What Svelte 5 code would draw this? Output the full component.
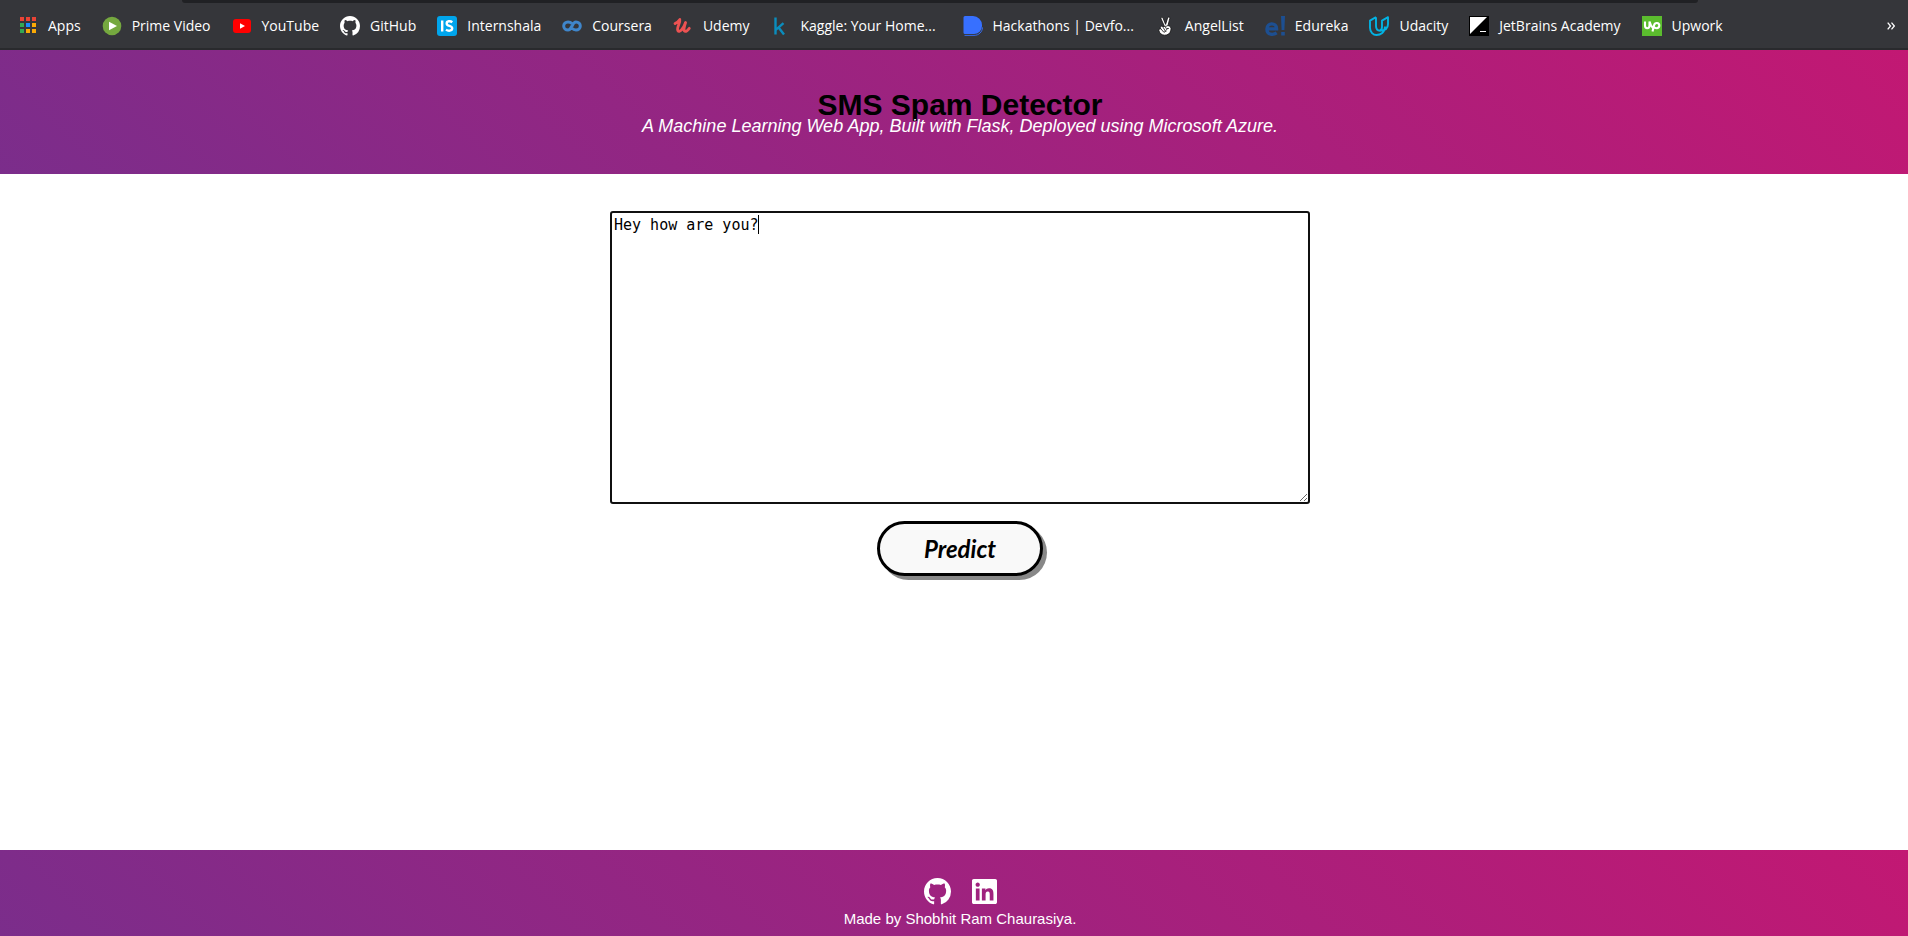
<script>
  const bookmarks = [
    { id: 'apps', label: 'Apps' },
    { id: 'prime', label: 'Prime Video' },
    { id: 'youtube', label: 'YouTube' },
    { id: 'github', label: 'GitHub' },
    { id: 'internshala', label: 'Internshala' },
    { id: 'coursera', label: 'Coursera' },
    { id: 'udemy', label: 'Udemy' },
    { id: 'kaggle', label: 'Kaggle: Your Home...', long: true },
    { id: 'devfolio', label: 'Hackathons | Devfo...', long: true },
    { id: 'angel', label: 'AngelList' },
    { id: 'edureka', label: 'Edureka' },
    { id: 'udacity', label: 'Udacity' },
    { id: 'jetbrains', label: 'JetBrains Academy' },
    { id: 'upwork', label: 'Upwork' }
  ];
  const dots = ['#ea4335', '#ea4335', '#ea4335', '#34a853', '#1a8cff', '#fbaa05', '#34a853', '#fbaa05', '#fbaa05'];
  const octocat = 'M8 0C3.58 0 0 3.58 0 8c0 3.54 2.29 6.53 5.47 7.59.4.07.55-.17.55-.38 0-.19-.01-.82-.01-1.49-2.01.37-2.53-.49-2.69-.94-.09-.23-.48-.94-.82-1.13-.28-.15-.68-.52-.01-.53.63-.01 1.08.58 1.23.82.72 1.21 1.87.87 2.33.66.07-.52.28-.87.51-1.07-1.78-.2-3.64-.89-3.64-3.95 0-.87.31-1.59.82-2.15-.08-.2-.36-1.02.08-2.12 0 0 .67-.21 2.2.82.64-.18 1.32-.27 2-.27s1.36.09 2 .27c1.53-1.04 2.2-.82 2.2-.82.44 1.1.16 1.92.08 2.12.51.56.82 1.27.82 2.15 0 3.07-1.87 3.75-3.65 3.95.29.25.54.73.54 1.48 0 1.07-.01 1.93-.01 2.2 0 .21.15.46.55.38A8.01 8.01 0 0 0 16 8c0-4.42-3.58-8-8-8z';
  let message = $state('Hey how are you?');
</script>

<div class="page">
  <nav class="bookmarks" aria-label="Bookmarks">
    <div class="omnibox-edge"></div>
    {#each bookmarks as b (b.id)}
      <a href="#{b.id}">
        <svg viewBox="0 0 20 20" aria-hidden="true">
          {#if b.id === 'apps'}
            {#each dots as fill, i}
              <rect x={2 + (i % 3) * 6} y={1 + Math.floor(i / 3) * 6} width="4" height="4" {fill} />
            {/each}
          {:else if b.id === 'prime'}
            <circle cx="10" cy="10" r="9.3" fill="#75a83f" />
            <path d="M7 5.7 15 10l-8 4.3z" fill="#fff" />
          {:else if b.id === 'youtube'}
            <rect x="1" y="3" width="18" height="14" rx="3" fill="#f00" />
            <path d="M8 7.2 13 10l-5 2.8z" fill="#fff" />
          {:else if b.id === 'github'}
            <path d={octocat} transform="scale(1.25)" fill="#fff" />
          {:else if b.id === 'internshala'}
            <rect width="20" height="20" rx="3" fill="#00a5ec" />
            <path d="M5.2 4.5v11M15.3 6.2C13.2 4.6 9.7 5 9.7 7.4c0 3.2 5.5 1.7 5.5 4.9 0 2.8-4 3-6.2 1.3" fill="none" stroke="#fff" stroke-width="2.4" />
          {:else if b.id === 'coursera'}
            <path d="M9.800 7.400C8.800 6.300 7.600 6 6 6c-2.500 0-4.300 1.700-4.300 4S3.500 14 6 14c4.200 0 3.800-8 8-8 2.500 0 4.300 1.700 4.300 4s-1.800 4-4.300 4c-1.700 0-2.900-.5-3.800-1.600" fill="none" stroke="#3f86cb" stroke-width="3" />
          {:else if b.id === 'udemy'}
            <path d="M3 7.600C5 6.800 7 4.600 7.800 3.500c.8 3-3.600 8.700-1.900 11.200 1.400 2.100 5.300-1.200 7.700-8.200-1.700 4.800-2.300 8.700-.5 8.900 1.400.2 2.900-1.400 4.200-3.100" fill="none" stroke="#ec5252" stroke-width="2.800" stroke-linecap="round" stroke-linejoin="round" transform="translate(-1 0)" />
          {:else if b.id === 'kaggle'}
            <path d="M5.500 1.500v17M13.500 7.200 6 13.600M8.600 11.400l5.400 7" fill="none" stroke="#0b8dbd" stroke-width="2.400" transform="translate(-1 0)" />
          {:else if b.id === 'devfolio'}
            <path d="M2 0h8a9 9 0 0 1 9 9v1a8 8 0 0 1-8 8H2a1.500 1.500 0 0 1-1.500-1.500v-15A1.500 1.500 0 0 1 2 0z" fill="#3770ff" />
            <path d="M1.500 19.400H11c5 0 8.300-3.500 8.500-8" fill="none" stroke="#3770ff" stroke-width=".9" />
          {:else if b.id === 'angel'}
            <g fill="#fff" stroke="#111" stroke-width=".8" stroke-linejoin="round">
              <path d="M9.500 10.500 6.100 3c-.7-1.700 1.300-2.300 2-.8l2.500 6.200 2-6.500c.5-1.600 2.500-1.100 2.200.5L13 9.500c2.600.8 3.400 2.200 2.900 4.600-.7 3.600-3.300 5.300-6.500 5.100-2.800-.2-5-2-5.500-4.600-.2-1.200.7-2 2-1.800-1.500-2 .2-3.200 1.700-2.300z" />
              <path d="M5.900 12.800 8.600 16c1.400.7 2-.7 1.200-1.800L7.600 10.500M9.500 10.500c1.200-.2 2.800-.3 3.500-1M10 11.300c1.700 1.800 3.100 1 3.600 1.200-2 .2-3.100 1.600-2.800 3.500" fill="none" />
            </g>
          {:else if b.id === 'edureka'}
            <path d="M2 12.800h9.600c0-6.600-9.700-6.800-9.700.2 0 6.500 6.700 6 9.800 3.900" fill="none" stroke="#1d4f91" stroke-width="3.300" />
            <path d="M16 0h4l-.6 14h-2.800zM16.200 16h3.600v3.600h-3.600z" fill="#1d4f91" />
          {:else if b.id === 'udacity'}
            <path d="M7 1.200 1 4.600v7.100c0 4.500 3.300 7.300 6.500 7.300 4 0 8.500-2.500 8.500-8.400M7 1.200v8.900c0 3 1.600 4.600 4 4.600 3.800 0 8-1.500 8-6.600V1.200l-6 3.400v6.500c0 1.800-.8 3-2.300 3.600" fill="none" stroke="#02b3e4" stroke-width="1.900" stroke-linejoin="round" />
          {:else if b.id === 'jetbrains'}
            <rect width="20" height="20" />
            <path d="M1 1h17L1 18z" fill="#fff" />
            <path d="M11 15.500h6" stroke="#fff" />
          {:else}
            <rect width="20" height="20" fill="#5bbc2e" />
            <path d="M3 5.500v4c0 3.700 4.500 3.700 4.500 0v-4c.8 3 1.800 5 3.600 6.700M10.500 15.500l1.500-6c.8-3.500 5.300-3 5.300 0 0 3.300-4 3.300-5.300 1.300" fill="none" stroke="#fff" stroke-width="2.100" />
          {/if}
        </svg>
        <span class:long={b.long}>{b.label}</span>
      </a>
    {/each}
    <button class="more" aria-label="More bookmarks">
      <svg viewBox="0 0 8 8" aria-hidden="true"><path d="M.7.700 3.500 4 .7 7.300M4.500.700 7.300 4 4.500 7.300" fill="none" stroke="#fff" stroke-width="1.300" /></svg>
    </button>
  </nav>

  <header class="banner">
    <h1>SMS Spam Detector</h1>
    <p>A Machine Learning Web App, Built with Flask, Deployed using Microsoft Azure.</p>
  </header>

  <main>
    <form onsubmit={(e) => e.preventDefault()}>
      <div class="field">
        <textarea aria-label="Message" bind:value={message}></textarea>
        <span class="caret" style="left: calc(4px + {message.length}ch)"></span>
      </div>
      <button class="predict">Predict</button>
    </form>
  </main>

  <footer>
    <div class="social">
      <a href="#github-profile" aria-label="GitHub">
        <svg class="octocat" viewBox="0 0 16 16" aria-hidden="true"><path d={octocat} fill="#fff" /></svg>
      </a>
      <a href="#linkedin-profile" aria-label="LinkedIn">
        <svg class="linkedin" viewBox="0 0 448 448" aria-hidden="true"><path fill="#fff" d="M416 0H31.900C14.300 0 0 14.500 0 32.300v383.400C0 433.500 14.300 448 31.900 448H416c17.600 0 32-14.500 32-32.300V32.300C448 14.500 433.600 0 416 0zM135.400 384H69V170.200h66.500V384zM102.200 141c-21.300 0-38.500-17.300-38.500-38.500S80.900 64 102.200 64c21.200 0 38.500 17.300 38.500 38.500 0 21.300-17.200 38.500-38.500 38.500zM384.300 384h-66.400V280c0-24.800-.5-56.700-34.500-56.700-34.600 0-39.900 27-39.900 54.900V384h-66.400V170.200h63.700v29.200h.9c8.900-16.800 30.600-34.500 62.900-34.500 67.200 0 79.700 44.300 79.700 101.900z" /></svg>
      </a>
    </div>
    <p>Made by Shobhit Ram Chaurasiya.</p>
  </footer>
</div>

<style>
  :global(body) { margin: 0; }
  .page {
    min-height: 100vh;
    display: flex;
    flex-direction: column;
    overflow: hidden;
    background: #fff;
    font-family: "Liberation Sans", Arial, sans-serif;
  }
  h1, p { margin: 0; }
  .bookmarks {
    position: relative;
    display: flex;
    align-items: center;
    gap: 21px;
    height: 50px;
    padding: 4px 13px 0 18px;
    box-sizing: border-box;
    background: #35363a;
    border-bottom: 2px solid #292a2d;
    font: 14px/20px "Open Sans", "Segoe UI", sans-serif;
  }
  .omnibox-edge {
    position: absolute;
    top: 0;
    left: 182px;
    right: 210px;
    height: 3px;
    border-radius: 0 0 8px 8px;
    background: #202124;
  }
  .bookmarks a {
    display: flex;
    align-items: center;
    gap: 10px;
    color: #fff;
    text-decoration: none;
    white-space: nowrap;
  }
  .bookmarks a svg { width: 20px; height: 20px; flex: none; }
  .long { min-width: 141px; }
  .more {
    margin-left: auto;
    padding: 0;
    border: 0;
    background: none;
    display: flex;
  }
  .more svg { width: 8px; height: 8px; }
  .banner, footer {
    background: linear-gradient(45deg, #7b2d8b, #c21873);
    text-align: center;
    color: #fff;
    box-sizing: border-box;
  }
  .banner { padding: 40px 0 38px 12px; }
  h1 {
    font-size: 30px;
    line-height: 30px;
    color: #000;
  }
  .banner p { font-size: 18px; line-height: 16px; margin-top: -2px; padding-bottom: 2px; font-style: italic; }
  main { flex: 1; padding: 37px 0 16px 12px; }
  form { display: flex; flex-direction: column; align-items: center; gap: 17px; }
  .field { position: relative; width: 700px; max-width: 100%; font: 15px/20px "DejaVu Sans Mono", monospace; }
  textarea {
    display: block;
    width: 100%;
    height: 293px;
    box-sizing: border-box;
    padding: 2px;
    border: 2px solid #101010;
    border-radius: 3px;
    outline: 0;
    color: #000;
    font: inherit;
    background: #fff;
  }
  .caret { position: absolute; top: 4px; width: 1px; height: 19px; background: #000; }
  .predict {
    padding: 8px 44px;
    border: 3px solid #000;
    border-radius: 28px;
    background: #f9f9f9;
    box-shadow: 4px 4px 0 #888;
    color: #000;
    font: italic bold 24px/33px Lato, Calibri, sans-serif;
  }
  footer { padding: 27px 0 4px 12px; }
  .social { display: flex; justify-content: center; align-items: center; gap: 21px; height: 29px; }
  .social a { display: flex; }
  .octocat { width: 27px; height: 27px; }
  .linkedin { width: 25px; height: 25px; }
  footer p { font-size: 15px; line-height: 26px; }
</style>
